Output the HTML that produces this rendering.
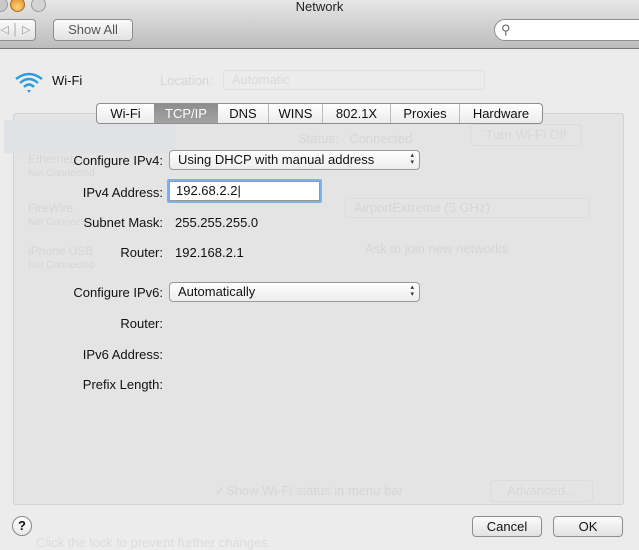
<!DOCTYPE html>
<html><head><style>
body{margin:0;width:639px;height:545px;overflow:hidden;background:#ececec;font-family:"Liberation Sans",sans-serif;font-size:13px;color:#111;position:relative}
.a{position:absolute}
.tb{left:0;top:0;width:639px;height:48px;background:linear-gradient(#e6e6e6,#bdbdbd);border-bottom:1px solid #7a7a7a}
.btn{background:linear-gradient(#fbfbfb,#e2e2e2);border:1px solid #8e8e8e;border-radius:4px;text-align:center;box-sizing:border-box}
.faint{color:#d6d6d6}
.lbl{text-align:right;width:163px;left:0}
.pop{background:linear-gradient(#fff,#ededed);border:1px solid #9a9a9a;border-radius:4px;box-sizing:border-box;padding-left:8px;line-height:18px}
.pop:after{content:"▴\A▾";white-space:pre;position:absolute;right:5px;top:1px;font-size:7px;line-height:7px;color:#333}
</style></head><body>
<div class="a tb"></div>
<div class="a" style="left:0;top:-1px;width:639px;text-align:center;font-size:13px;color:#222">Network</div>
<div class="a" style="left:-7px;top:-3px;width:13px;height:13px;border-radius:50%;background:#c8c8c8;border:1px solid #999"></div>
<div class="a" style="left:10px;top:-3px;width:13px;height:13px;border-radius:50%;background:radial-gradient(circle at 50% 70%,#fbd27a,#e08a1b);border:1px solid #a86a1a"></div>
<div class="a" style="left:31px;top:-3px;width:13px;height:13px;border-radius:50%;background:#d4d4d4;border:1px solid #999"></div>
<div class="a btn" style="left:-5px;top:19px;width:41px;height:22px;color:#999;font-size:11px;line-height:20px">◁ │ ▷</div>
<div class="a btn" style="left:53px;top:19px;width:80px;height:22px;line-height:20px;color:#555">Show All</div>
<div class="a" style="left:494px;top:19px;width:160px;height:22px;border-radius:11px;background:#fff;border:1px solid #8e8e8e;box-sizing:border-box;font-size:13px;color:#666;padding-left:6px;line-height:19px">⚲</div>
<svg class="a" style="left:13px;top:70px" width="32" height="26"><g fill="none" stroke="#2a9be0" stroke-width="2.5"><path d="M3 9 Q16 -1 29 9"/><path d="M7 13 Q16 5 25 13"/><path d="M11 17 Q16 12 21 17"/></g><path d="M14 20 L18 20 L16 23Z" fill="#2a9be0"/></svg>
<div class="a" style="left:52px;top:73px">Wi-Fi</div>
<div class="a faint" style="left:160px;top:73px">Location:</div>
<div class="a" style="left:223px;top:70px;width:262px;height:20px;border:1px solid #e0e0e0;border-radius:4px;color:#dadada;padding-left:8px;box-sizing:border-box;line-height:18px">Automatic</div>
<div class="a" style="left:13px;top:113px;width:611px;height:392px;background:#e4e4e4;border:1px solid #d2d2d2;border-radius:3px;box-sizing:border-box"></div>
<div class="a" style="left:4px;top:120px;width:172px;height:33px;background:#e0e2e5"></div>
<div class="a faint" style="left:28px;top:153px;font-size:12px;line-height:13px">Ethernet<br><span style="font-size:10px">Not Connected</span></div>
<div class="a faint" style="left:28px;top:202px;font-size:12px;line-height:13px">FireWire<br><span style="font-size:10px">Not Connected</span></div>
<div class="a faint" style="left:28px;top:245px;font-size:12px;line-height:13px">iPhone USB<br><span style="font-size:10px">Not Connected</span></div>
<div class="a faint" style="left:298px;top:131px">Status: &nbsp; Connected</div>
<div class="a" style="left:470px;top:124px;width:112px;height:22px;border:1px solid #dcdcdc;border-radius:4px;color:#d8d8d8;text-align:center;line-height:20px;box-sizing:border-box">Turn Wi-Fi Off</div>
<div class="a faint" style="left:365px;top:241px">Ask to join new networks</div>
<div class="a faint" style="left:345px;top:262px;width:245px;height:20px;border:1px solid #dcdcdc;border-radius:4px;padding-left:8px;line-height:18px;display:none"></div>
<div class="a faint" style="left:345px;top:198px;width:245px;height:20px;border:1px solid #dcdcdc;border-radius:4px;padding-left:8px;line-height:18px;box-sizing:border-box">AirportExtreme (5 GHz)</div>
<div class="a faint" style="left:215px;top:483px">✓Show Wi-Fi status in menu bar</div>
<div class="a" style="left:490px;top:480px;width:103px;height:22px;border:1px solid #dcdcdc;border-radius:4px;color:#d8d8d8;text-align:center;line-height:20px;box-sizing:border-box">Advanced...</div>
<div class="a" style="left:36px;top:535px;color:#dcdcdc">Click the lock to prevent further changes.</div>
<!-- tabs -->
<div class="a" style="left:96px;top:103px;width:447px;height:21px;border:1px solid #8e8e8e;border-radius:4px;background:linear-gradient(#fff,#ececec);box-sizing:border-box;display:flex;line-height:19px;overflow:hidden">
<div style="width:57px;text-align:center">Wi-Fi</div>
<div style="width:64px;text-align:center;background:linear-gradient(#8d8d8d,#a3a3a3);color:#fff">TCP/IP</div>
<div style="width:50px;text-align:center;border-right:1px solid #bbb">DNS</div>
<div style="width:53px;text-align:center;border-right:1px solid #bbb">WINS</div>
<div style="width:67px;text-align:center;border-right:1px solid #bbb">802.1X</div>
<div style="width:68px;text-align:center;border-right:1px solid #bbb">Proxies</div>
<div style="flex:1;text-align:center">Hardware</div></div>
<div class="a lbl" style="top:153px">Configure IPv4:</div>
<div class="a pop" style="left:169px;top:150px;width:251px;height:20px">Using DHCP with manual address</div>
<div class="a lbl" style="top:185px">IPv4 Address:</div>
<div class="a" style="left:167px;top:179px;width:155px;height:24px;border:2px solid #7fb1e6;box-sizing:border-box;border-radius:2px;background:#fff"><div style="border:1px solid #999;height:18px;padding-left:6px;line-height:18px">192.68.2.2|</div></div>
<div class="a lbl" style="top:215px">Subnet Mask:</div>
<div class="a" style="left:175px;top:215px">255.255.255.0</div>
<div class="a lbl" style="top:245px">Router:</div>
<div class="a" style="left:175px;top:245px">192.168.2.1</div>
<div class="a lbl" style="top:285px">Configure IPv6:</div>
<div class="a pop" style="left:169px;top:282px;width:251px;height:20px">Automatically</div>
<div class="a lbl" style="top:316px">Router:</div>
<div class="a lbl" style="top:347px">IPv6 Address:</div>
<div class="a lbl" style="top:377px">Prefix Length:</div>
<div class="a" style="left:12px;top:516px;width:20px;height:20px;border-radius:50%;border:1px solid #888;background:linear-gradient(#fff,#e8e8e8);box-sizing:border-box;text-align:center;line-height:18px;font-weight:bold">?</div>
<div class="a btn" style="left:472px;top:516px;width:70px;height:21px;line-height:19px">Cancel</div>
<div class="a btn" style="left:553px;top:516px;width:70px;height:21px;line-height:19px">OK</div>
</body></html>
